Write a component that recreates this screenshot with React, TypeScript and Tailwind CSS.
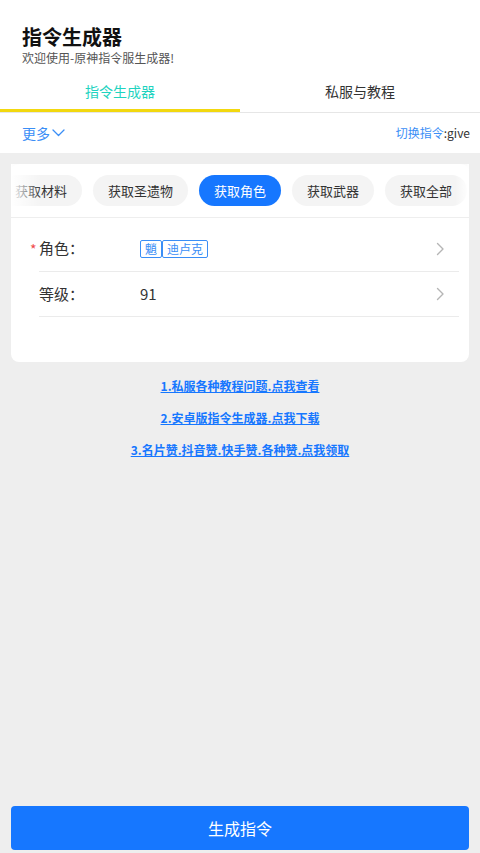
import React from "react";

const font = { fontFamily: '"Noto Sans CJK SC", "Noto Sans", Roboto, sans-serif' };

function Chevron() {
  return (
    <svg width="9" height="14" viewBox="0 0 9 14" fill="none">
      <path d="M1.5 1.5L7 7L1.5 12.5" stroke="#b5b5b5" strokeWidth="1.4" strokeLinecap="round" strokeLinejoin="round" />
    </svg>
  );
}

export default function App() {
  const chips = [
    { t: "获取材料", a: false },
    { t: "获取圣遗物", a: false },
    { t: "获取角色", a: true },
    { t: "获取武器", a: false },
    { t: "获取全部", a: false },
  ];
  return (
    <div className="min-h-[853px] h-[853px] flex flex-col bg-[#eeeeee]" style={font}>
      <div className="bg-white">
        <div className="px-[22px] pt-[25px]">
          <div className="text-[20px] leading-[24px] font-bold text-[#111]">指令生成器</div>
          <div className="text-[12px] leading-[16px] mt-[1px] text-[#555]">欢迎使用-原神指令服生成器!</div>
        </div>
        <div className="flex mt-[7px]">
          <div className="flex-1 flex flex-col">
            <div className="h-[36px] flex items-center justify-center text-[14px] text-[#1fd3bf]">指令生成器</div>
            <div className="h-[3px] bg-[#f2d80f]" />
          </div>
          <div className="flex-1 flex flex-col">
            <div className="h-[36px] flex items-center justify-center text-[14px] text-[#333]">私服与教程</div>
            <div className="h-[3px] bg-white" />
          </div>
        </div>
        <div className="h-[1px] bg-[#e6e6e6]" />
        <div className="h-[40px] flex items-center justify-between pl-[22px] pr-[10px]">
          <div className="flex items-center gap-[2px] text-[14px] text-[#3a8ef6]">
            <span>更多</span>
            <svg width="13" height="8" viewBox="0 0 13 8" fill="none">
              <path d="M1 1L6.5 6.5L12 1" stroke="#3a8ef6" strokeWidth="1.3" strokeLinecap="round" strokeLinejoin="round" />
            </svg>
          </div>
          <div className="text-[12px]">
            <span className="text-[#3a8ef6]">切换指令</span>
            <span className="text-[#333]">:give</span>
          </div>
        </div>
      </div>

      <div className="mx-[11px] mt-[11px] bg-white rounded-[8px]">
        <div className="relative overflow-hidden py-[11px]">
          <div className="flex gap-[11px] ml-[-11px]">
            {chips.map((c) => (
              <div
                key={c.t}
                className={
                  c.a
                    ? "shrink-0 h-[31px] px-[15px] rounded-full flex items-center text-[13px] bg-[#1677ff] text-white"
                    : "shrink-0 h-[31px] px-[15px] rounded-full flex items-center text-[13px] bg-[#f4f4f4] text-[#333]"
                }
              >
                {c.t}
              </div>
            ))}
          </div>
          <div className="absolute left-0 top-0 bottom-0 w-[30px] bg-gradient-to-r from-white to-transparent" />
          <div className="absolute right-0 top-0 bottom-0 w-[14px] bg-gradient-to-l from-white to-transparent" />
        </div>
        <div className="h-[1px] bg-[#eeeeee]" />
        <div className="pt-[8px] pb-[45px] pl-[28px] pr-[10px]">
          <div className="relative h-[46px] flex items-center border-b border-[#ebebeb]">
            <span className="absolute left-[-9px] top-[13px] text-[#f04a4a] text-[14px]">*</span>
            <div className="w-[101px] text-[15px] text-[#333]">角色：</div>
            <div className="flex-1 flex">
              <span className="px-[4px] h-[18px] flex items-center text-[12px] text-[#3a8ef6] border border-[#3a8ef6] rounded-[2px]">魈</span>
              <span className="px-[4px] h-[18px] flex items-center text-[12px] text-[#3a8ef6] border border-[#3a8ef6] rounded-[2px]">迪卢克</span>
            </div>
            <div className="pr-[14px] flex items-center"><Chevron /></div>
          </div>
          <div className="h-[45px] flex items-center border-b border-[#ebebeb]">
            <div className="w-[101px] text-[15px] text-[#333]">等级：</div>
            <div className="flex-1 text-[15px] text-[#333]">91</div>
            <div className="pr-[14px] flex items-center"><Chevron /></div>
          </div>
        </div>
      </div>

      <div className="flex flex-col items-center mt-[15px] gap-[15px] text-[12px] font-bold text-[#1677ff]">
        <a className="underline leading-[17px]">1.私服各种教程问题.点我查看</a>
        <a className="underline leading-[17px]">2.安卓版指令生成器.点我下载</a>
        <a className="underline leading-[17px]">3.名片赞.抖音赞.快手赞.各种赞.点我领取</a>
      </div>

      <div className="flex-1" />
      <div className="mx-[11px] mb-[3px] h-[44px] rounded-[4px] bg-[#1677ff] flex items-center justify-center text-[16px] text-white">
        生成指令
      </div>
    </div>
  );
}
